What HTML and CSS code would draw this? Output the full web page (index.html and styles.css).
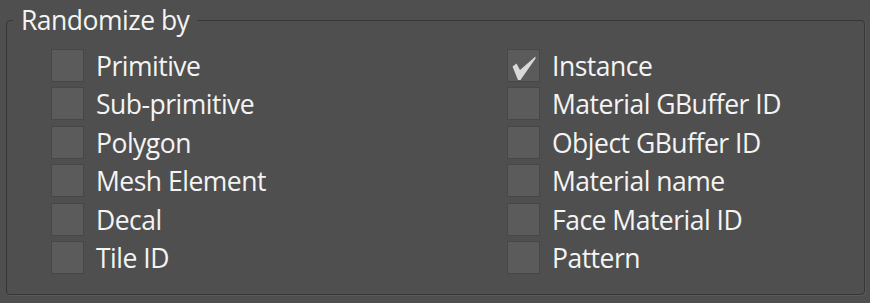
FILE: index.html
```html
<!DOCTYPE html>
<html>
<head>
<meta charset="utf-8">
<link rel="stylesheet" href="styles.css">
</head>
<body>
<fieldset class="group">
  <legend class="group-title">Randomize by</legend>
  <div class="grid">
    <div class="col">
      <label class="opt"><span class="box"></span><span class="lbl">Primitive</span></label>
      <label class="opt"><span class="box"></span><span class="lbl">Sub-primitive</span></label>
      <label class="opt"><span class="box"></span><span class="lbl">Polygon</span></label>
      <label class="opt"><span class="box"></span><span class="lbl">Mesh Element</span></label>
      <label class="opt"><span class="box"></span><span class="lbl">Decal</span></label>
      <label class="opt"><span class="box"></span><span class="lbl">Tile ID</span></label>
    </div>
    <div class="col">
      <label class="opt"><span class="box"><svg class="check" viewBox="0 0 33 33" width="33" height="33"><path d="M5.5 17.5 L9.5 14.5 L13 21 L28.5 7.5 L28.5 9.5 L13.5 31 L11 31 Z" fill="#d9d9d9"/></svg></span><span class="lbl">Instance</span></label>
      <label class="opt"><span class="box"></span><span class="lbl">Material GBuffer ID</span></label>
      <label class="opt"><span class="box"></span><span class="lbl">Object GBuffer ID</span></label>
      <label class="opt"><span class="box"></span><span class="lbl">Material name</span></label>
      <label class="opt"><span class="box"></span><span class="lbl">Face Material ID</span></label>
      <label class="opt"><span class="box"></span><span class="lbl">Pattern</span></label>
    </div>
  </div>
</fieldset>
</body>
</html>
```
FILE: styles.css
```css
html, body {
  margin: 0;
  padding: 0;
  background: #4f4f4f;
  width: 870px;
  height: 303px;
  overflow: hidden;
}
body {
  padding: 7px 6px 0 6px;
  box-sizing: border-box;
  font-family: "Open Sans", "Noto Sans", sans-serif;
  color: #f4f4f4;
}
.group {
  margin: 0;
  width: 859px;
  height: 288px;
  box-sizing: border-box;
  border: 1px solid #363636;
  border-radius: 4px;
  padding: 0;
  box-shadow: 1px 1px 0 #5a5a5a;
}
.group-title {
  padding: 0 8px;
  margin-left: 6px;
  font-size: 26.5px;
  letter-spacing: -0.5px;
  line-height: 26px;
}
.grid {
  display: grid;
  grid-template-columns: 456px 1fr;
  margin-top: 16px;
  padding-left: 44px;
}
.col {
  display: flex;
  flex-direction: column;
  gap: 5.4px;
}
.opt {
  display: flex;
  align-items: center;
  gap: 12px;
  height: 33px;
}
.box {
  width: 33px;
  height: 33px;
  box-sizing: border-box;
  background: #5b5b5b;
  border: 1px solid #474747;
  position: relative;
  flex: none;
}
.check {
  position: absolute;
  left: -1px;
  top: -1px;
}
.lbl {
  font-size: 26.5px;
  letter-spacing: -0.5px;
  line-height: 33px;
  padding-top: 2px;
}
```
